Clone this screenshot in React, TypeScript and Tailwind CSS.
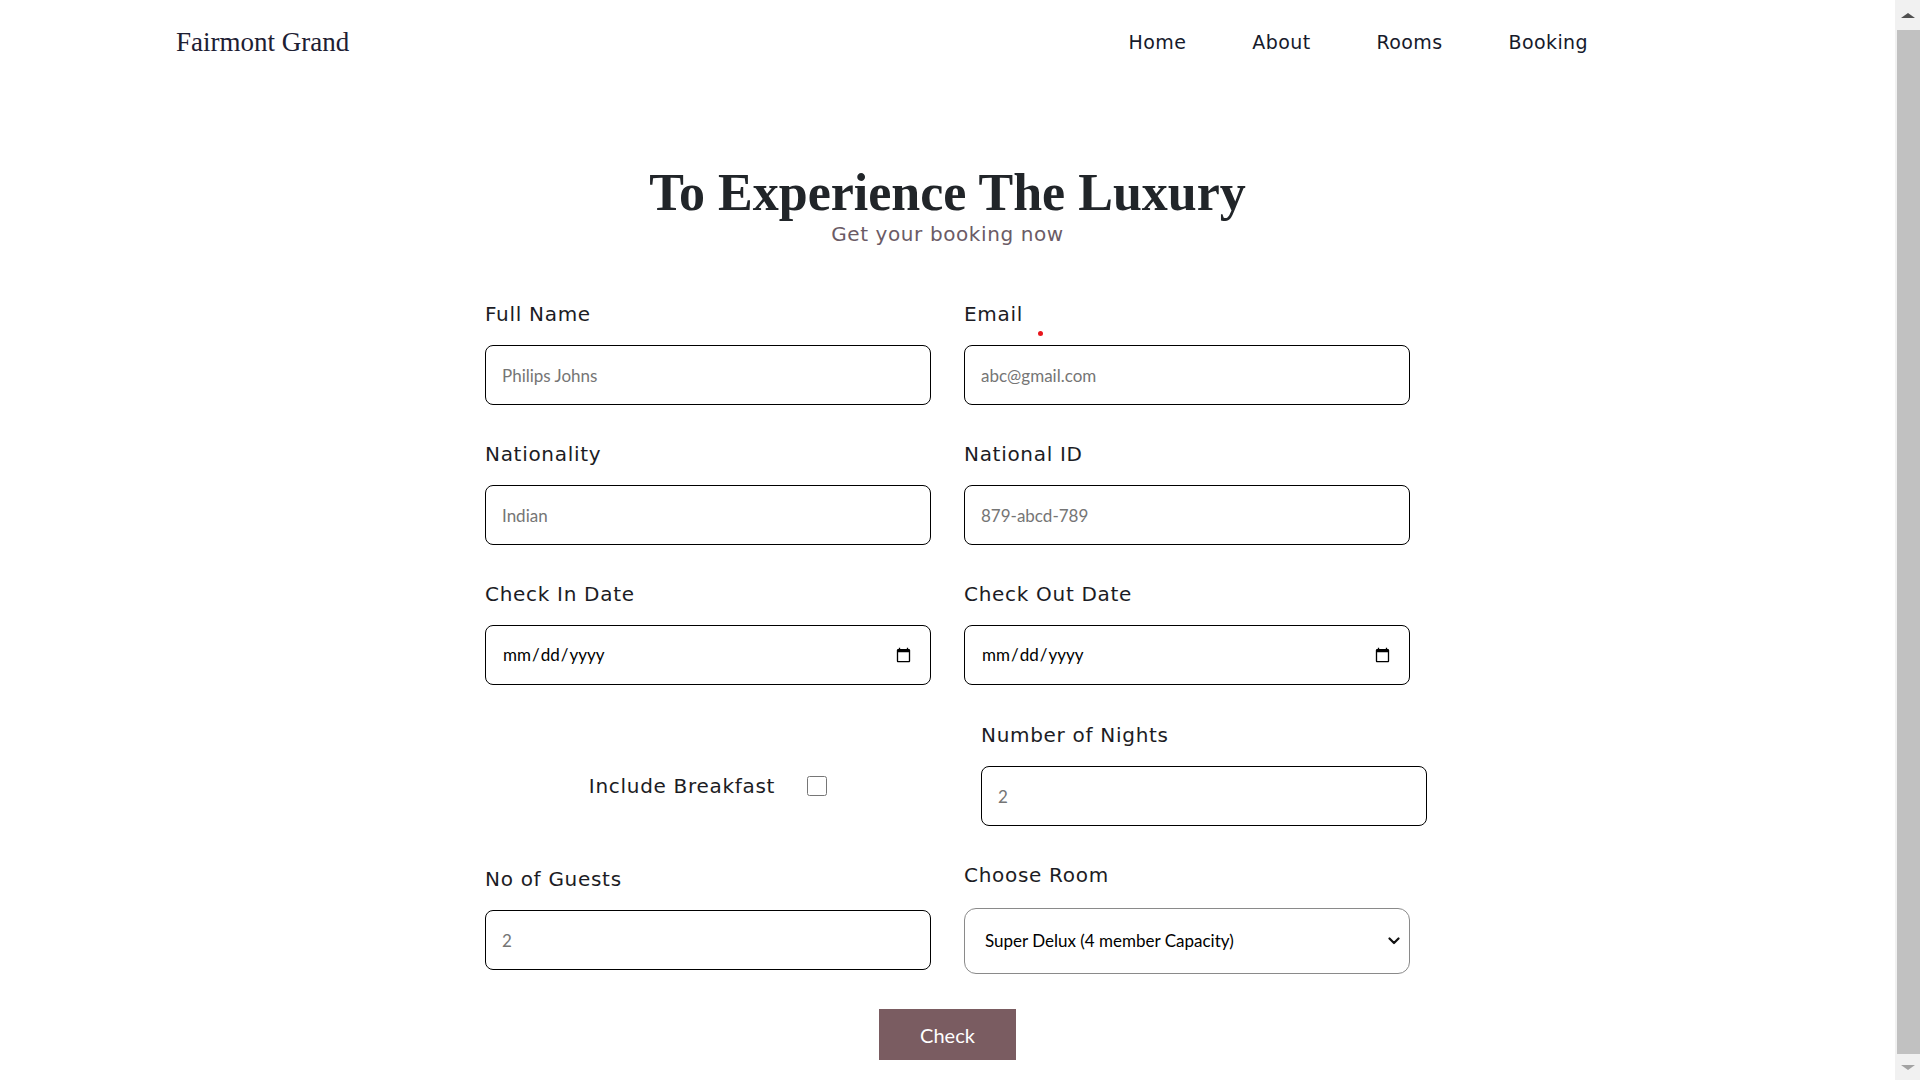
import React from "react";

const labelFont = { fontFamily: '"DejaVu Sans", "Noto Sans", sans-serif' };

const Field: React.FC<{ label: string; children: React.ReactNode; dot?: boolean }> = ({ label, children, dot }) => {
  return (
    <div className="flex flex-col">
      <div className="relative">
        <label className="block h-[24px] text-[20px] leading-[24px] tracking-[0.7px] text-[#1c1c24]" style={labelFont}>
          {label}
        </label>
        {dot && <span className="absolute left-[74px] top-[29px] h-[5px] w-[5px] rounded-full bg-[#e8161c]" />}
      </div>
      <div className="mt-[19px]">{children}</div>
    </div>
  );
};

const inputCls =
  "block h-[60px] w-[446px] rounded-[8px] border border-black bg-white px-4 text-[17px] text-black placeholder:text-[#757575] font-['Lato',sans-serif] outline-none";

export default function App() {
  return (
    <div className="flex h-screen w-full overflow-hidden bg-white">
      <main className="flex flex-1 flex-col">
        {/* header */}
        <header className="flex h-[84px] items-center justify-between pl-[176px] pr-[307px]">
          <div className="font-['Liberation_Serif',serif] text-[27px] text-[#1d2033]">Fairmont Grand</div>
          <nav className="flex gap-[66px] text-[19px] tracking-[0.4px] text-[#161a2b]" style={labelFont}>
            <a>Home</a>
            <a>About</a>
            <a>Rooms</a>
            <a>Booking</a>
          </nav>
        </header>

        {/* title */}
        <div className="mt-[83px] flex flex-col items-center">
          <h1 className="font-['Liberation_Serif',serif] text-[52px] font-bold leading-none text-[#212529]">
            To Experience The Luxury
          </h1>
          <p className="mt-[3px] text-[20px] leading-[24px] tracking-[0.6px] text-[#6b5b66]" style={labelFont}>
            Get your booking now
          </p>
        </div>

        {/* form */}
        <form className="mx-auto mt-[56px] w-[925px]">
          <div className="grid grid-cols-2 gap-x-[33px] gap-y-[37px]">
            <Field label="Full Name">
              <input className={inputCls} placeholder="Philips Johns" />
            </Field>
            <Field label="Email" dot>
              <input className={inputCls} placeholder="abc@gmail.com" />
            </Field>
            <Field label="Nationality">
              <input className={inputCls} placeholder="Indian" />
            </Field>
            <Field label="National ID">
              <input className={inputCls} placeholder="879-abcd-789" />
            </Field>
            <Field label="Check In Date">
              <input type="date" className={inputCls} />
            </Field>
            <Field label="Check Out Date">
              <input type="date" className={inputCls} />
            </Field>
          </div>

          <div className="mt-[38px] grid grid-cols-2 gap-x-[33px]">
            <div className="flex items-center justify-center gap-[32px] pt-[22px]">
              <span className="text-[20px] tracking-[0.7px] text-[#1c1c24]" style={labelFont}>
                Include Breakfast
              </span>
              <input type="checkbox" className="h-[20px] w-[20px]" />
            </div>
            <div className="ml-[17px]">
              <Field label="Number of Nights">
                <input className={inputCls} placeholder="2" />
              </Field>
            </div>
          </div>

          <div className="mt-[37px] grid grid-cols-2 items-center gap-x-[33px]">
            <Field label="No of Guests">
              <input className={inputCls} placeholder="2" />
            </Field>
            <div className="flex flex-col">
              <label className="block h-[24px] text-[20px] leading-[24px] tracking-[0.7px] text-[#1c1c24]" style={labelFont}>
                Choose Room
              </label>
              <div className="relative mt-[21px]">
                <select className="block h-[66px] w-[446px] appearance-none rounded-[12px] border border-[#8a8a8a] bg-white pl-[20px] pr-10 text-[17px] text-black font-['Lato',sans-serif] outline-none">
                  <option>Super Delux (4 member Capacity)</option>
                  <option>Delux (2 member Capacity)</option>
                </select>
                <svg
                  className="pointer-events-none absolute right-[10px] top-1/2 -translate-y-1/2"
                  width="12"
                  height="8"
                  viewBox="0 0 12 8"
                  fill="none"
                >
                  <path d="M1.5 1.5 L6 6 L10.5 1.5" stroke="#111" strokeWidth="2.2" strokeLinecap="round" strokeLinejoin="round" />
                </svg>
              </div>
            </div>
          </div>

          <div className="mt-[35px] flex justify-center">
            <button type="button" className="h-[51px] w-[137px] bg-[#7a5c61] text-[20px] text-white font-['Lato',sans-serif]">
              Check
            </button>
          </div>
        </form>
      </main>

      {/* scrollbar */}
      <div className="flex w-[25px] flex-col bg-[#f1f1f1]">
        <div className="flex h-[30px] items-center justify-center">
          <div className="h-0 w-0 border-x-[7px] border-b-[5px] border-x-transparent border-b-[#505050]" />
        </div>
        <div className="ml-[2px] flex-1 bg-[#c1c1c1]" />
        <div className="flex h-[26px] items-center justify-center">
          <div className="h-0 w-0 border-x-[7px] border-t-[5px] border-x-transparent border-t-[#a3a3a3]" />
        </div>
      </div>
    </div>
  );
}
